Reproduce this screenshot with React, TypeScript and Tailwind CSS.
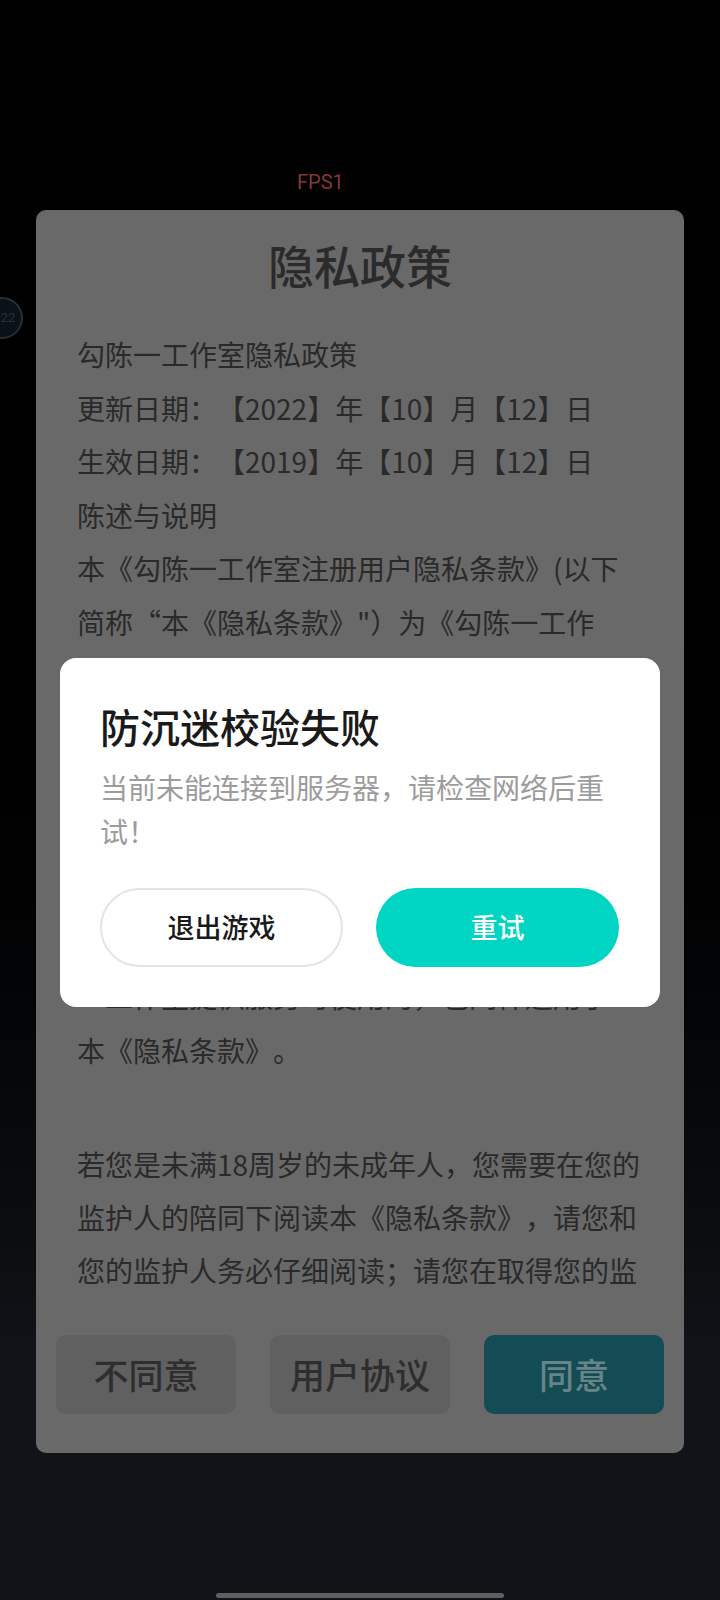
import React from "react";

const topLines = [
  "勾陈一工作室隐私政策",
  "更新日期：【2022】年【10】月【12】日",
  "生效日期：【2019】年【10】月【12】日",
  "陈述与说明",
  "本《勾陈一工作室注册用户隐私条款》(以下",
  "简称“本《隐私条款》\"）为《勾陈一工作",
  "室注册用户协议》的重要组成部分。勾陈一",
  "工作室尊重并保护所有注册用户的个人隐私",
  "权。为了给您提供更准确、更有个性化的服",
  "务，勾陈一工作室会按照本《隐私条款》的",
  "规定使用和披露您的个人信息。勾陈一工作",
  "室将以高度的勤勉、审慎义务对待这些信息",
  "一工作室提供服务时使用的，也同样适用于",
  "本《隐私条款》。",
];

const bottomLines = [
  "若您是未满18周岁的未成年人，您需要在您的",
  "监护人的陪同下阅读本《隐私条款》，请您和",
  "您的监护人务必仔细阅读；请您在取得您的监",
];

export default function App() {
  return (
    <div className="relative w-[720px] h-[1600px] overflow-hidden bg-linear-to-b from-black from-30% to-[#101317] to-85% font-['Noto_Sans_CJK_SC',sans-serif] [text-spacing-trim:space-all]">
      {/* floating badge at left edge */}
      <div className="absolute left-[-19px] top-[297px] w-[42px] h-[42px] rounded-full border-2 border-[#2a2f35] bg-[#0b1119] flex items-center justify-center text-[13px] text-[#26303b] font-['Roboto',sans-serif]">
        <span className="pl-[12px]">22</span>
      </div>

      <div className="flex flex-col items-center pt-[170px]">
        <div className="w-full pl-[297px] h-[24px] leading-[24px] text-[20px] text-[#8a3535] font-['Roboto',sans-serif]">FPS1</div>

        {/* privacy panel (dimmed) */}
        <div className="mt-[16px] w-[648px] h-[1243px] rounded-[10px] bg-[#696969] flex flex-col">
          <div className="pt-[24px] h-[84px] text-center text-[46px] leading-[60px] font-medium text-[#2b2b2b]">
            隐私政策
          </div>

          <div className="mt-[34px] h-[972px] overflow-hidden pl-[41px] pr-[30px] text-[28px] text-[#2a2a2a]">
            {topLines.map((line, i) => (
              <div key={i} className="h-[53.5px] leading-[53.5px] whitespace-nowrap">
                {line}
              </div>
            ))}
            <div className="h-[60.5px]" />
            {bottomLines.map((line, i) => (
              <div key={i} className="h-[53px] leading-[53px] whitespace-nowrap">
                {line}
              </div>
            ))}
          </div>

          <div className="mt-[35px] px-[20px] flex gap-[34px]">
            <div className="w-[180px] h-[79px] rounded-[10px] bg-[#606060] flex items-center justify-center text-[35px] font-medium text-[#2e2e2e]">
              不同意
            </div>
            <div className="w-[180px] h-[79px] rounded-[10px] bg-[#606060] flex items-center justify-center text-[35px] font-medium text-[#2e2e2e]">
              用户协议
            </div>
            <div className="w-[180px] h-[79px] rounded-[10px] bg-[#134c55] flex items-center justify-center text-[35px] font-medium text-[#678587]">
              同意
            </div>
          </div>
        </div>

        {/* home indicator */}
        <div className="mt-[140px] w-[288px] h-[5px] rounded-full bg-[#5f5f5f]" />
      </div>

      {/* anti-addiction dialog */}
      <div className="absolute left-[60px] top-[658px] w-[600px] h-[349px] rounded-[16px] bg-white px-[40px] pt-[44px]">
        <div className="h-[48px] leading-[48px] text-[40px] font-medium text-[#1a1a1a]">防沉迷校验失败</div>
        <div className="mt-[15px] text-[28px] leading-[44px] text-[#9c9c9c]">
          <div className="whitespace-nowrap">当前未能连接到服务器，请检查网络后重</div>
          <div>试！</div>
        </div>
        <div className="mt-[35px] flex gap-[33px]">
          <div className="w-[243px] h-[79px] rounded-full border-2 border-[#e4e4e4] flex items-center justify-center text-[27px] font-medium text-[#1a1a1a]">
            退出游戏
          </div>
          <div className="w-[243px] h-[79px] rounded-full bg-[#00d5c3] flex items-center justify-center text-[27px] font-medium text-white">
            重试
          </div>
        </div>
      </div>
    </div>
  );
}
